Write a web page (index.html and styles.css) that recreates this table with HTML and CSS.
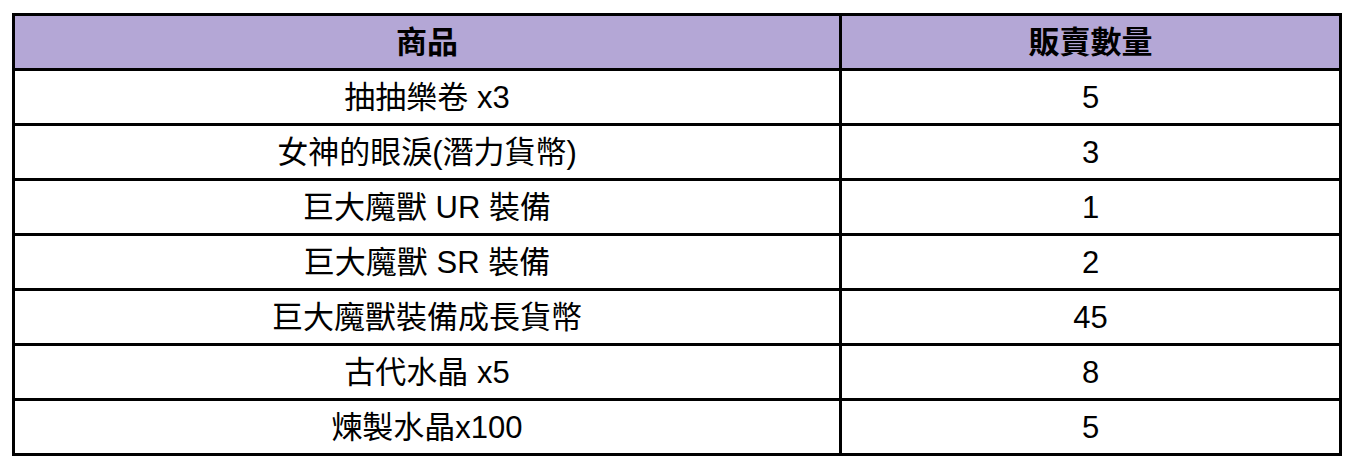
FILE: index.html
```html
<!DOCTYPE html>
<html lang="zh-Hant">
<head>
<meta charset="utf-8">
<title>販賣數量</title>
<link rel="stylesheet" href="styles.css">
</head>
<body>
<table class="sales">
  <thead>
    <tr>
      <th class="col-item">商品</th>
      <th class="col-qty">販賣數量</th>
    </tr>
  </thead>
  <tbody>
    <tr><td>抽抽樂卷 x3</td><td>5</td></tr>
    <tr><td>女神的眼淚(潛力貨幣)</td><td>3</td></tr>
    <tr><td>巨大魔獸 UR 裝備</td><td>1</td></tr>
    <tr><td>巨大魔獸 SR 裝備</td><td>2</td></tr>
    <tr><td>巨大魔獸裝備成長貨幣</td><td>45</td></tr>
    <tr><td>古代水晶 x5</td><td>8</td></tr>
    <tr><td>煉製水晶x100</td><td>5</td></tr>
  </tbody>
</table>
</body>
</html>
```

FILE: styles.css
```css
html, body {
  margin: 0;
  padding: 0;
  background: #ffffff;
}

body {
  font-family: "Liberation Sans", "Noto Sans CJK TC", sans-serif;
  color: #000000;
}

.sales {
  margin: 13px 0 0 12px;
  border-collapse: separate;
  border-spacing: 3px;
  background: #000000;
  table-layout: fixed;
  width: 1330px;
}

.sales th,
.sales td {
  height: 52px;
  padding: 0;
  text-align: center;
  vertical-align: middle;
  font-size: 31px;
  line-height: 31px;
  background: #ffffff;
  white-space: nowrap;
}

.sales th {
  background: #b4a7d6;
  font-weight: bold;
}

.col-item {
  width: 824px;
}

.col-qty {
  width: 497px;
}
```
